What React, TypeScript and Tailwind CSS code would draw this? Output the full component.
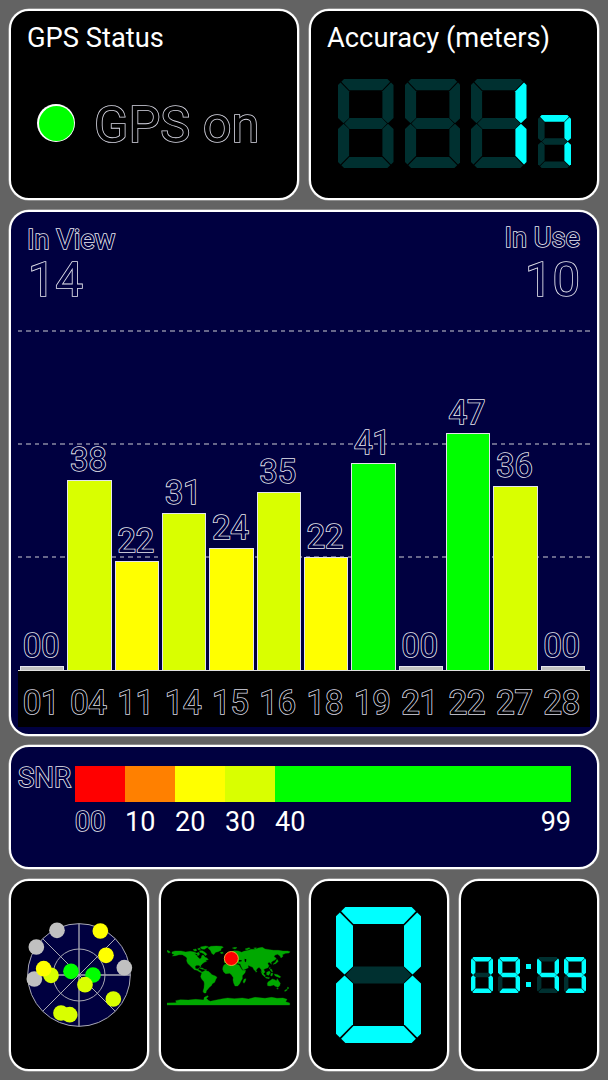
import type { ReactNode } from "react";
import clsx from "clsx";

interface Satellite {
  prn: string;
  snr: string;
  height: number;
  color: string;
}

// bar heights are in px, measured from the baseline
const satellites: Satellite[] = [
  { prn: "01", snr: "00", height: 4, color: "bg-[#c0c0c0]" },
  { prn: "04", snr: "38", height: 190, color: "bg-[#d9ff00]" },
  { prn: "11", snr: "22", height: 109, color: "bg-[#ffff00]" },
  { prn: "14", snr: "31", height: 157, color: "bg-[#d9ff00]" },
  { prn: "15", snr: "24", height: 122, color: "bg-[#ffff00]" },
  { prn: "16", snr: "35", height: 178, color: "bg-[#d9ff00]" },
  { prn: "18", snr: "22", height: 113, color: "bg-[#ffff00]" },
  { prn: "19", snr: "41", height: 207, color: "bg-[#00ff00]" },
  { prn: "21", snr: "00", height: 4, color: "bg-[#c0c0c0]" },
  { prn: "22", snr: "47", height: 237, color: "bg-[#00ff00]" },
  { prn: "27", snr: "36", height: 184, color: "bg-[#d9ff00]" },
  { prn: "28", snr: "00", height: 4, color: "bg-[#c0c0c0]" },
];

// hollow lettering: the fill takes the panel colour and sits on top of the stroke
const OUTLINE_NAVY = "text-[#000040] [-webkit-text-stroke:1.6px_#e8e8f0] [paint-order:stroke_fill]";
const OUTLINE_BLACK = "text-black [-webkit-text-stroke:1.6px_#d8d8e4] [paint-order:stroke_fill]";

// segment order: a b c d e f g, on a 10 x 16 grid
const SEGMENTS = [
  "1.1,0 8.9,0 9.4,0.5 7.95,2 2.05,2 0.6,0.5",
  "9.55,0.65 10,1.1 10,7 9,7.95 8,7 8,2.2",
  "9,8.05 10,9 10,14.9 9.55,15.35 8,13.8 8,9",
  "2.05,14 7.95,14 9.4,15.5 8.9,16 1.1,16 0.6,15.5",
  "1,8.05 2,9 2,13.8 0.45,15.35 0,14.9 0,9",
  "0.45,0.65 2,2.2 2,7 1,7.95 0,7 0,1.1",
  "1.15,8 2.1,7 7.9,7 8.85,8 7.9,9 2.1,9",
];

const DIGITS: Record<string, string> = {
  " ": "0000000",
  "0": "1111110",
  "1": "0110000",
  "4": "0110011",
  "7": "1110000",
  "9": "1111011",
};

function SegmentDigit({ value, className }: { value: string; className?: string }) {
  return (
    <svg viewBox="0 0 10 16" preserveAspectRatio="none" className={clsx("shrink-0", className)}>
      {SEGMENTS.map((points, i) => (
        <polygon key={i} points={points} fill={DIGITS[value][i] === "1" ? "#00ffff" : "#003030"} />
      ))}
    </svg>
  );
}

function Panel({ className, children }: { className?: string; children: ReactNode }) {
  return (
    <div className={clsx("rounded-[20px] border-2 border-white shadow-[0_0_0_0.5px_#ffffff90] overflow-hidden", className)}>
      {children}
    </div>
  );
}

function SatelliteChart() {
  return (
    <Panel className="h-[526px] bg-[#000040] px-[7px]">
      <div className="h-[118px] flex justify-between">
        <div className="pl-[9px] pt-[13px]">
          <p className={clsx("text-[27.3px] leading-[30px]", OUTLINE_NAVY)}>In View</p>
          <p className={clsx("pl-px text-[49px] leading-[50px]", OUTLINE_NAVY)}>14</p>
        </div>
        <div className="pr-[10px] pt-[11px] text-right">
          <p className={clsx("text-[27.3px] leading-[30px]", OUTLINE_NAVY)}>In Use</p>
          <p className={clsx("text-[49px] leading-[54px]", OUTLINE_NAVY)}>10</p>
        </div>
      </div>

      <div className="relative h-[340px]">
        <div className="absolute inset-0 flex flex-col">
          {[75, 50, 25].map((level) => (
            <div key={level} className="h-[113px]">
              <div className="h-[2px] bg-[repeating-linear-gradient(90deg,#67678a_0_4.5px,transparent_4.5px_8.47px)]" />
            </div>
          ))}
        </div>
        <div className="relative h-full flex items-end gap-[3px] pl-[2px] pr-[5px]">
          {satellites.map((sat) => (
            <div key={sat.prn} className="flex-1">
              <p className={clsx("-ml-[2px] text-center text-[32.5px] leading-[40px]", OUTLINE_NAVY)}>{sat.snr}</p>
              <div className={clsx("border border-b-0 border-[#e4e4ec]", sat.color)} style={{ height: sat.height }} />
            </div>
          ))}
        </div>
      </div>

      <div className="h-[57px] bg-black border-t border-[#e0e0e0] flex gap-[3px] pl-[2px] pr-[5px]">
        {satellites.map((sat) => (
          <p key={sat.prn} className={clsx("flex-1 -ml-[1px] mr-[1px] text-center text-[32.5px] leading-[64px]", OUTLINE_BLACK)}>
            {sat.prn}
          </p>
        ))}
      </div>
    </Panel>
  );
}

function SnrLegend() {
  return (
    <Panel className="h-[124px] bg-[#000040] flex pl-[7px] pt-[19px]">
      <p className={clsx("w-[57px] shrink-0 text-[27.5px] leading-[24px]", OUTLINE_NAVY)}>SNR</p>
      <div className="w-[496px]">
        <div className="h-[35.5px] flex">
          <div className="w-[50px] bg-[#ff0000]" />
          <div className="w-[50px] bg-[#ff8000]" />
          <div className="w-[50px] bg-[#ffff00]" />
          <div className="w-[50px] bg-[#d9ff00]" />
          <div className="flex-1 bg-[#00ff00]" />
        </div>
        <div className="flex text-[27px] leading-[40px] text-white">
          <span className={clsx("w-[50px]", OUTLINE_NAVY)}>00</span>
          <span className="w-[50px]">10</span>
          <span className="w-[50px]">20</span>
          <span className="w-[50px]">30</span>
          <span>40</span>
          <span className="ml-auto">99</span>
        </div>
      </div>
    </Panel>
  );
}

const skyDots = [
  { x: 171, y: 181, fill: "#c0c0c0" },
  { x: 109, y: 231, fill: "#c0c0c0" },
  { x: 103, y: 327, fill: "#c0c0c0" },
  { x: 373, y: 293, fill: "#c0c0c0" },
  { x: 301, y: 183, fill: "#ffff00" },
  { x: 318, y: 256, fill: "#ffff00" },
  { x: 153, y: 316, fill: "#d9ff00" },
  { x: 131, y: 296, fill: "#ffff00" },
  { x: 213, y: 304, fill: "#00ff00" },
  { x: 279, y: 315, fill: "#00ff00" },
  { x: 255, y: 344, fill: "#d9ff00" },
  { x: 340, y: 387, fill: "#d9ff00" },
  { x: 209, y: 434, fill: "#d9ff00" },
  { x: 183, y: 429, fill: "#d9ff00" },
];

function SkyView() {
  return (
    <svg viewBox="75 153 324 324" className="size-[108px]">
      <g fill="none" stroke="#a9a9b4" strokeWidth="3">
        <circle cx="237" cy="315" r="154" fill="#000040" />
        <circle cx="237" cy="315" r="78" />
        <path d="M237 161V469M83 315H391" strokeWidth="4" />
        <path d="M128 206L346 424M346 206L128 424" />
      </g>
      {skyDots.map((dot, i) => (
        <circle key={i} cx={dot.x} cy={dot.y} r="23.5" fill={dot.fill} />
      ))}
    </svg>
  );
}

function WorldMap() {
  return (
    <svg viewBox="36 45 372 183" className="w-[124px] h-[61px]">
      <g fill="#00a800" stroke="#00a800" strokeWidth="1">
        {/* north america */}
        <path d="M51 66L60 63L78 63L92 66L106 64L118 66L126 70L130 66L134 72L130 78L132 82L139 82L141 76L146 76L150 82L156 84L160 89L152 91L155 94L148 97L142 101L137 107L137 112L132 106L124 106L120 110L122 116L127 117L131 115L130 120L136 122L140 126L145 126L142 129L134 126L126 121L118 119L112 113L104 106L98 100L95 92L96 84L90 79L82 74L72 74L62 77L52 78L58 73L51 71Z" />
        <path d="M36 61L42 63L46 67L41 69L37 66Z" />
        <path d="M114 59L122 57L126 61L120 64ZM128 56L134 54L137 58L131 60ZM136 51L152 48L160 50L154 54L148 58L140 57ZM134 62L142 62L150 67L156 73L151 77L146 71L140 68L134 67Z" />
        <path d="M132 113L142 114L148 118L142 118ZM148 118L156 120L150 122Z" />
        {/* greenland, iceland, svalbard */}
        <path d="M158 53L168 49L184 48L200 49L205 52L198 56L198 61L189 65L182 67L176 74L170 70L167 62L162 57Z" />
        <path d="M196 67L203 66L205 70L198 71ZM232 54L240 52L246 53L240 57Z" />
        {/* south america */}
        <path d="M142 126L150 122L160 124L166 129L171 134L181 138L186 142L182 149L179 157L172 161L169 167L163 172L159 177L154 183L153 189L147 189L144 184L147 174L148 162L147 155L140 147L137 140L139 133Z" />
        {/* africa */}
        <path d="M207 105L216 100L229 99L234 104L244 103L252 105L257 113L262 121L272 121L270 128L262 137L262 146L258 153L254 161L248 168L240 168L236 159L234 150L235 143L230 135L224 130L212 131L206 126L203 118L204 111Z" />
        <path d="M267 148L273 146L271 154L267 160L264 156Z" />
        {/* europe and asia */}
        <path d="M208 98L208 92L216 90L213 84L222 79L228 80L225 73L228 66L238 62L250 63L260 67L266 64L280 61L288 58L300 58L310 54L322 52L330 57L344 59L356 61L370 61L384 63L398 63L405 65L402 69L392 70L382 74L384 79L378 84L375 78L368 73L360 75L357 80L364 85L360 90L353 93L348 98L350 103L342 96L338 101L342 107L339 113L330 116L326 119L330 126L325 131L320 124L318 118L312 112L306 116L302 124L297 119L293 112L286 109L279 106L280 113L272 117L264 120L258 109L256 103L248 100L242 100L240 97L234 92L230 97L222 93L216 99Z" />
        <path d="M212 78L217 75L220 81L213 83ZM366 88L370 94L362 101L354 103L362 96ZM270 57L282 53L286 55L276 60ZM296 54L304 53L302 57ZM302 122L306 124L303 127ZM343 113L346 113L344 117Z" />
        {/* south-east asia, oceania */}
        <path d="M318 124L324 130L331 137L330 141L322 134ZM332 141L344 143L342 146L332 144ZM335 127L343 123L346 128L341 136L335 134ZM348 130L354 130L351 138L347 137ZM345 117L350 118L353 126L348 124ZM358 132L368 134L377 140L375 143L366 140L360 137Z" />
        <path d="M340 155L347 151L352 147L359 149L364 152L367 146L371 153L376 160L374 167L369 172L361 169L356 165L346 168L338 167L337 160Z" />
        <path d="M365 175L370 174L368 178ZM398 171L402 174L397 178ZM394 178L397 180L391 184L388 183Z" />
        {/* antarctica */}
        <path d="M36 219L64 218L62 212L76 209L100 210L122 208L146 210L148 202L158 197L160 200L154 205L160 211L166 214L184 210L204 206L218 204L238 206L262 204L280 207L300 202L330 205L350 202L366 205L384 204L396 208L392 215L404 219L404 225L36 225Z" />
      </g>
      <g fill="#000">
        <path d="M118 71L124 74L128 80L134 86L139 84L136 76L128 78L126 72Z" />
        <path d="M252 90L260 91L260 94L252 95ZM269 86L274 88L273 97L269 94Z" />
      </g>
      <circle cx="229" cy="85.5" r="21" fill="#ff0000" stroke="#ffc040" strokeWidth="2.5" />
    </svg>
  );
}

function Clock() {
  return (
    <div className="flex items-center mr-[2px]">
      <SegmentDigit value="0" className="w-[22px] h-[36px] mr-[5px]" />
      <SegmentDigit value="9" className="w-[22px] h-[36px]" />
      <div className="mx-[6px] flex flex-col gap-[13px]">
        <div className="size-[5px] bg-[#00ffff]" />
        <div className="size-[5px] bg-[#00ffff]" />
      </div>
      <SegmentDigit value="4" className="w-[22px] h-[36px] mr-[5px]" />
      <SegmentDigit value="9" className="w-[22px] h-[36px]" />
    </div>
  );
}

export default function App() {
  return (
    <div className="w-[608px] h-[1080px] bg-[#636363] p-[9px] flex flex-col font-[Roboto,sans-serif] overflow-hidden">
      <div className="flex gap-[10px] h-[191px] mb-[10px]">
        <Panel className="flex-1 bg-black">
          <h2 className="pl-[16px] pt-[12px] text-[27.3px] leading-[30px] text-white">GPS Status</h2>
          <div className="flex items-center pl-[26px] mt-[39px]">
            <div className="size-[38px] rounded-full bg-white p-[1.5px]">
              <div className="size-full rounded-full bg-[#00ff00]" />
            </div>
            <span className={clsx("ml-[19px] pt-[3px] text-[50.5px] leading-[59px]", OUTLINE_BLACK)}>GPS on</span>
          </div>
        </Panel>
        <Panel className="flex-1 bg-black">
          <h2 className="pl-[16px] pt-[12px] text-[27.3px] leading-[30px] text-white">Accuracy (meters)</h2>
          <div className="flex items-end pl-[27px] mt-[26px]">
            <SegmentDigit value=" " className="w-[55.5px] h-[89px] mr-[11.2px]" />
            <SegmentDigit value=" " className="w-[55.5px] h-[89px] mr-[11.2px]" />
            <SegmentDigit value="1" className="w-[55.5px] h-[89px] mr-[11.2px]" />
            <SegmentDigit value="7" className="w-[33px] h-[53px]" />
          </div>
        </Panel>
      </div>

      <SatelliteChart />
      <div className="h-[9px]" />
      <SnrLegend />

      <div className="mt-[10px] h-[192px] flex gap-[10px]">
        <Panel className="flex-1 bg-black flex items-center justify-center">
          <SkyView />
        </Panel>
        <Panel className="flex-1 bg-black flex items-center justify-center">
          <WorldMap />
        </Panel>
        <Panel className="flex-1 bg-black flex items-center justify-center">
          <SegmentDigit value="0" className="w-[85px] h-[136px] mr-px" />
        </Panel>
        <Panel className="flex-1 bg-black flex items-center justify-center">
          <Clock />
        </Panel>
      </div>
    </div>
  );
}
